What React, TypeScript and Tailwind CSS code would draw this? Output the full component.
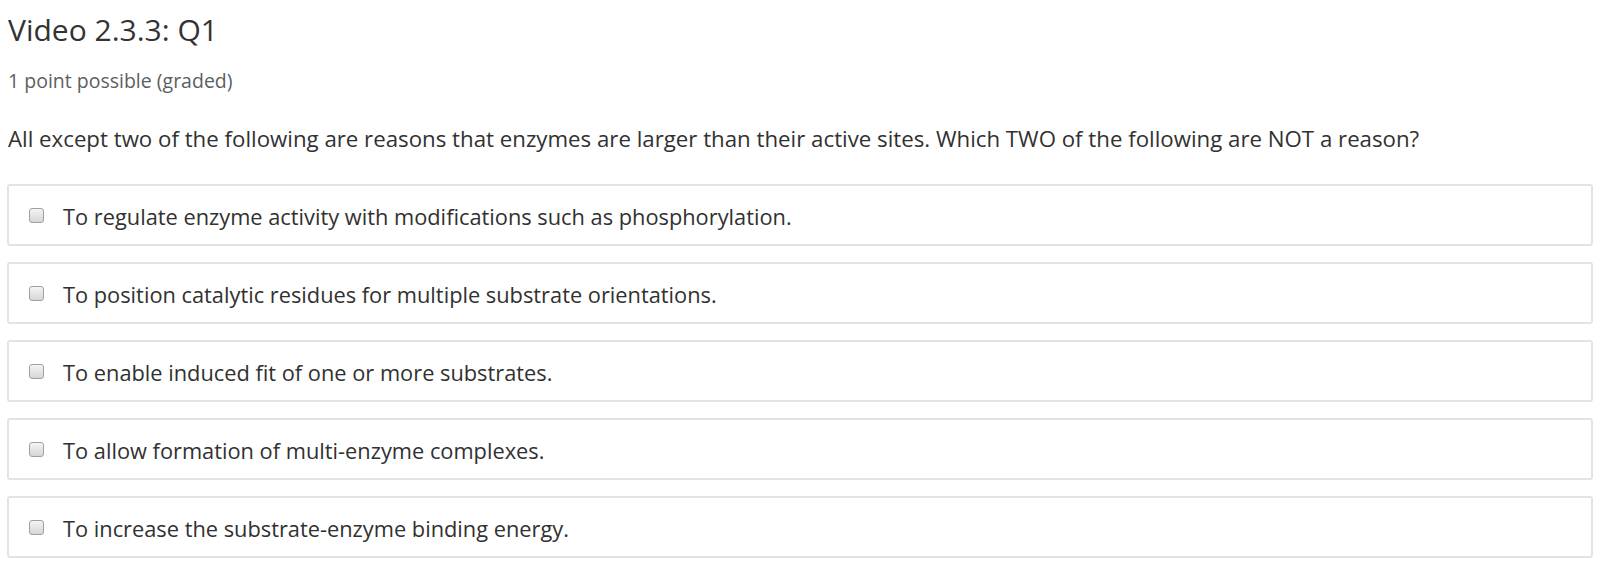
import React from 'react';

const options = [
  'To regulate enzyme activity with modifications such as phosphorylation.',
  'To position catalytic residues for multiple substrate orientations.',
  'To enable induced fit of one or more substrates.',
  'To allow formation of multi-enzyme complexes.',
  'To increase the substrate-enzyme binding energy.',
];

const App: React.FC = () => {
  return (
    <div
      className="min-h-screen bg-white pl-[7px] pr-[7px] text-[#313131]"
      style={{ fontFamily: '"Open Sans", sans-serif' }}
    >
      <h3 className="pt-[12px] pl-px text-[30px] leading-[36px] font-normal text-[#333]">Video 2.3.3: Q1</h3>
      <div className="mt-[21px] pl-px text-[19.5px] leading-[24px] text-[#5e5e5e]">1 point possible (graded)</div>
      <p className="mt-[32px] pl-px text-[22.25px] leading-[28px]">
        All except two of the following are reasons that enzymes are larger than their active sites. Which TWO of the
        following are NOT a reason?
      </p>
      <div className="mt-[31px] flex flex-col gap-[16px]">
        {options.map((o) => (
          <label
            key={o}
            className="flex h-[62px] items-center rounded-[3px] border-2 border-[#e4e4e4] pl-[20px]"
          >
            <span className="h-[15px] w-[15px] rounded-[3px] border border-[#a0a0a0] bg-gradient-to-b from-[#f4f4f4] to-[#d6d6d6]" />
            <span className="ml-[19px] pt-[3px] text-[21.8px] leading-[28px] text-[#313131]">{o}</span>
          </label>
        ))}
      </div>
    </div>
  );
};

export default App;
